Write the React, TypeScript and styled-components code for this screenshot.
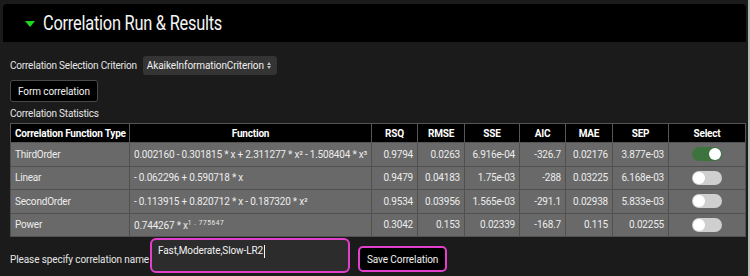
import React from "react";
import styled, { createGlobalStyle } from "styled-components";

const Global = createGlobalStyle`
  html, body { margin: 0; padding: 0; background: #1b1b1b; }
  body { font-family: Roboto, "Liberation Sans", sans-serif; color: #e6e6e6; }
  * { box-sizing: border-box; }
`;

const Frame = styled.div`
  width: 750px;
  height: 276px;
  overflow: hidden;
  background: #1b1b1b;
  border-right: 2px solid #b8b8b8;
  padding: 4px 2px 0 3px;
  display: flex;
  flex-direction: column;
`;

const Header = styled.div`
  height: 38px;
  background: #000;
  border-radius: 4px 4px 0 0;
  display: flex;
  align-items: center;
  padding-left: 22px;
  gap: 8px;
`;

const Caret = styled.span`
  width: 0;
  height: 0;
  border-left: 5px solid transparent;
  border-right: 5px solid transparent;
  border-top: 6px solid #1ed61e;
  margin-top: 1px;
`;

const Title = styled.h1`
  margin: 0;
  font-size: 20.5px;
  font-weight: 400;
  color: #f4f4f4;
  letter-spacing: -0.3px;
  white-space: nowrap;
  transform: scaleX(0.8);
  transform-origin: left center;
`;

const Body = styled.div`
  padding: 14px 0 0 7px;
  display: flex;
  flex-direction: column;
  align-items: flex-start;
`;

const Row = styled.div`
  display: flex;
  align-items: center;
  gap: 6px;
`;

const Label = styled.span`
  font-size: 10px;
  letter-spacing: -0.2px;
  color: #e6e6e6;
`;

const Select = styled.div`
  height: 19px;
  width: 134px;
  background: #343434;
  border-radius: 3px;
  display: flex;
  align-items: center;
  justify-content: space-between;
  padding: 0 6px 0 4px;
  font-size: 10px;
  letter-spacing: -0.1px;
  color: #f0f0f0;
`;

const Arrows = styled.span`
  display: flex;
  flex-direction: column;
  gap: 1px;
  & > i {
    display: block;
    width: 0;
    height: 0;
    border-left: 2px solid transparent;
    border-right: 2px solid transparent;
  }
  & > i:first-child { border-bottom: 3px solid #bbb; }
  & > i:last-child { border-top: 3px solid #bbb; }
`;

const Button = styled.button<{ $pink?: boolean }>`
  font-family: Roboto, "Liberation Sans", sans-serif;
  font-size: 10px;
  letter-spacing: -0.1px;
  color: #f2f2f2;
  background: #000;
  border: ${(p) => (p.$pink ? "2px solid #e23fcd" : "1px solid #4a4a4a")};
  border-radius: ${(p) => (p.$pink ? "5px" : "3px")};
  padding: 0 7px;
  height: ${(p) => (p.$pink ? "26px" : "22px")};
  cursor: pointer;
`;

const SectionLabel = styled(Label)`
  margin-top: 6px;
  line-height: 12px;
`;

const Table = styled.table`
  margin-top: 3px;
  border-collapse: collapse;
  table-layout: fixed;
  width: 735px;
  font-size: 10px;
  letter-spacing: -0.2px;
  border: 1px solid #5c5c5c;
`;

const Th = styled.th<{ $left?: boolean }>`
  background: #000;
  color: #fff;
  font-weight: 700;
  height: 19px;
  padding: 0 4px;
  text-align: ${(p) => (p.$left ? "left" : "center")};
  border: 1px solid #555;
  white-space: nowrap;
`;

const Td = styled.td<{ $align?: "left" | "right" | "center" }>`
  background: #696969;
  color: #ececec;
  height: 23.5px;
  padding: 0 4px;
  text-align: ${(p) => p.$align ?? "left"};
  border: 1px solid #505050;
  white-space: nowrap;
  overflow: hidden;
`;

const Sup = styled.sup`
  font-size: 6.5px;
  vertical-align: 4px;
  letter-spacing: 0.6px;
`;

const Toggle = styled.span<{ $on?: boolean }>`
  display: inline-flex;
  align-items: center;
  width: 30px;
  height: 14px;
  border-radius: 7px;
  background: ${(p) => (p.$on ? "#3d733d" : "#cfcfcf")};
  justify-content: ${(p) => (p.$on ? "flex-end" : "flex-start")};
  padding: 0 1px;
  vertical-align: middle;
  &::after {
    content: "";
    width: 12px;
    height: 12px;
    border-radius: 50%;
    background: #fff;
  }
`;

const NameRow = styled.div`
  display: flex;
  align-items: flex-end;
  margin-top: 1px;
`;

const NameLabel = styled(Label)`
  align-self: center;
  margin-top: 8px;
  width: 140px;
  white-space: nowrap;
  letter-spacing: -0.1px;
`;

const NameInput = styled.div`
  width: 200px;
  height: 35px;
  border: 2px solid #e23fcd;
  border-radius: 6px;
  background: #2c2c2c;
  font-size: 10px;
  letter-spacing: -0.1px;
  color: #f2f2f2;
  padding: 5px 0 0 6px;
  display: flex;
  align-items: flex-start;
`;

const Cursor = styled.span`
  display: inline-block;
  width: 1px;
  height: 13px;
  background: #f2f2f2;
  margin-left: 1px;
`;

const SaveWrap = styled.div`
  margin-left: 8px;
  margin-bottom: 1px;
`;

type R = { type: string; fn: React.ReactNode; v: string[]; on?: boolean };

const rows: R[] = [
  {
    type: "ThirdOrder",
    fn: "0.002160 - 0.301815 * x + 2.311277 * x² - 1.508404 * x³",
    v: ["0.9794", "0.0263", "6.916e-04", "-326.7", "0.02176", "3.877e-03"],
    on: true,
  },
  {
    type: "Linear",
    fn: "- 0.062296 + 0.590718 * x",
    v: ["0.9479", "0.04183", "1.75e-03", "-288", "0.03225", "6.168e-03"],
  },
  {
    type: "SecondOrder",
    fn: "- 0.113915 + 0.820712 * x - 0.187320 * x²",
    v: ["0.9534", "0.03956", "1.565e-03", "-291.1", "0.02938", "5.833e-03"],
  },
  {
    type: "Power",
    fn: (
      <>
        0.744267 * x<Sup>1 . 775647</Sup>
      </>
    ),
    v: ["0.3042", "0.153", "0.02339", "-168.7", "0.115", "0.02255"],
  },
];

const widths = [119, 242, 46, 47, 55, 46, 47, 56, 77];
const heads = ["RSQ", "RMSE", "SSE", "AIC", "MAE", "SEP"];

export default function App() {
  return (
    <>
      <Global />
      <Frame>
        <Header>
          <Caret />
          <Title>Correlation Run &amp; Results</Title>
        </Header>
        <Body>
          <Row>
            <Label>Correlation Selection Criterion</Label>
            <Select>
              <span>AkaikeInformationCriterion</span>
              <Arrows>
                <i />
                <i />
              </Arrows>
            </Select>
          </Row>
          <div style={{ height: 5 }} />
          <Button>Form correlation</Button>
          <SectionLabel>Correlation Statistics</SectionLabel>
          <Table>
            <colgroup>
              {widths.map((w, i) => (
                <col key={i} style={{ width: w }} />
              ))}
            </colgroup>
            <thead>
              <tr>
                <Th $left>Correlation Function Type</Th>
                <Th>Function</Th>
                {heads.map((h) => (
                  <Th key={h}>{h}</Th>
                ))}
                <Th>Select</Th>
              </tr>
            </thead>
            <tbody>
              {rows.map((r) => (
                <tr key={r.type}>
                  <Td>{r.type}</Td>
                  <Td>{r.fn}</Td>
                  {r.v.map((x, i) => (
                    <Td key={i} $align="right">
                      {x}
                    </Td>
                  ))}
                  <Td $align="center">
                    <Toggle $on={r.on} />
                  </Td>
                </tr>
              ))}
            </tbody>
          </Table>
          <NameRow>
            <NameLabel>Please specify correlation name</NameLabel>
            <NameInput>
              Fast,Moderate,Slow-LR2
              <Cursor />
            </NameInput>
            <SaveWrap>
              <Button $pink>Save Correlation</Button>
            </SaveWrap>
          </NameRow>
        </Body>
      </Frame>
    </>
  );
}
